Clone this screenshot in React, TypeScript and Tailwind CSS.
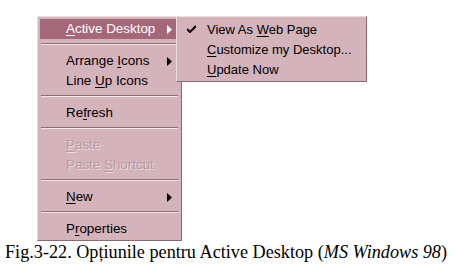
import React from 'react';

const menuFont = { fontFamily: '"Liberation Sans", Arial, sans-serif' };

type Item =
  | { kind: 'sep' }
  | { kind: 'item'; label: React.ReactNode; arrow?: boolean; active?: boolean; disabled?: boolean };

const U = ({ children }: { children: React.ReactNode }) => <span className="underline underline-offset-2">{children}</span>;

const items: Item[] = [
  { kind: 'item', label: <><U>A</U>ctive Desktop</>, arrow: true, active: true },
  { kind: 'sep' },
  { kind: 'item', label: <>Arrange <U>I</U>cons</>, arrow: true },
  { kind: 'item', label: <>Line <U>U</U>p Icons</> },
  { kind: 'sep' },
  { kind: 'item', label: <>Re<U>f</U>resh</> },
  { kind: 'sep' },
  { kind: 'item', label: <><U>P</U>aste</>, disabled: true },
  { kind: 'item', label: <>Paste <U>S</U>hortcut</>, disabled: true },
  { kind: 'sep' },
  { kind: 'item', label: <><U>N</U>ew</>, arrow: true },
  { kind: 'sep' },
  { kind: 'item', label: <>P<U>r</U>operties</> },
];

function Arrow({ light }: { light?: boolean }) {
  return (
    <svg width="5" height="9" viewBox="0 0 5 9" className="shrink-0">
      <path d="M0 0 L5 4.5 L0 9 Z" fill={light ? '#ffffff' : '#000000'} />
    </svg>
  );
}

function Separator() {
  return (
    <div className="h-[12px] pt-[4px] px-[1px]">
      <div className="h-[1px] bg-[#8f6f77]" />
      <div className="h-[1px] bg-[#f3e6ea]" />
    </div>
  );
}

export default function App() {
  return (
    <div className="w-[455px] h-[271px] bg-white overflow-hidden relative">
      <div className="pt-[16px] pl-[37px]">
        <div
          className="w-[145px] bg-[#d4b3bb] border-l border-t border-[#eedde2] border-r border-b border-r-[#8a6a72] border-b-[#8a6a72] px-[2px] pt-[2px] pb-[1px] text-[13.4px] leading-none text-black"
          style={menuFont}
        >
          {items.map((it, i) =>
            it.kind === 'sep' ? (
              <Separator key={i} />
            ) : (
              <div
                key={i}
                className={`h-[20px] flex items-center pl-[26px] pr-[7px] ${it.active ? 'bg-[#a5687a] text-white' : ''}`}
              >
                <span
                  className={`flex-1 ${it.disabled ? 'text-[#b39aa0]' : ''}`}
                  style={it.disabled ? { textShadow: '1px 1px 0 #ecdde1' } : undefined}
                >
                  {it.label}
                </span>
                {it.arrow && <Arrow light={it.active} />}
              </div>
            )
          )}
        </div>
      </div>

      {/* submenu */}
      <div
        className="absolute left-[176px] top-[16px] w-[191px] bg-[#d4b3bb] border-l border-t border-[#eedde2] border-r border-b border-r-[#8a6a72] border-b-[#8a6a72] px-[2px] pt-[2px] pb-[2px] text-[13px] leading-none text-black"
        style={menuFont}
      >
        <div className="h-[20px] flex items-center">
          <svg width="9" height="8" viewBox="0 0 9 8" className="ml-[8px] mr-[11px]">
            <path d="M0 4 L3 7 L9 1" stroke="#000" strokeWidth="2" fill="none" />
          </svg>
          <span>View As <U>W</U>eb Page</span>
        </div>
        <div className="h-[20px] flex items-center pl-[28px]">
          <span><U>C</U>ustomize my Desktop...</span>
        </div>
        <div className="h-[20px] flex items-center pl-[28px]">
          <span><U>U</U>pdate Now</span>
        </div>
      </div>

      <div
        className="pl-[5px] mt-[1px] text-[18.2px] leading-[20px] text-black whitespace-nowrap"
        style={{ fontFamily: '"Liberation Serif", "Times New Roman", serif' }}
      >
        Fig.3-22. Opțiunile pentru Active Desktop (<i>MS Windows 98</i>)
      </div>
    </div>
  );
}
